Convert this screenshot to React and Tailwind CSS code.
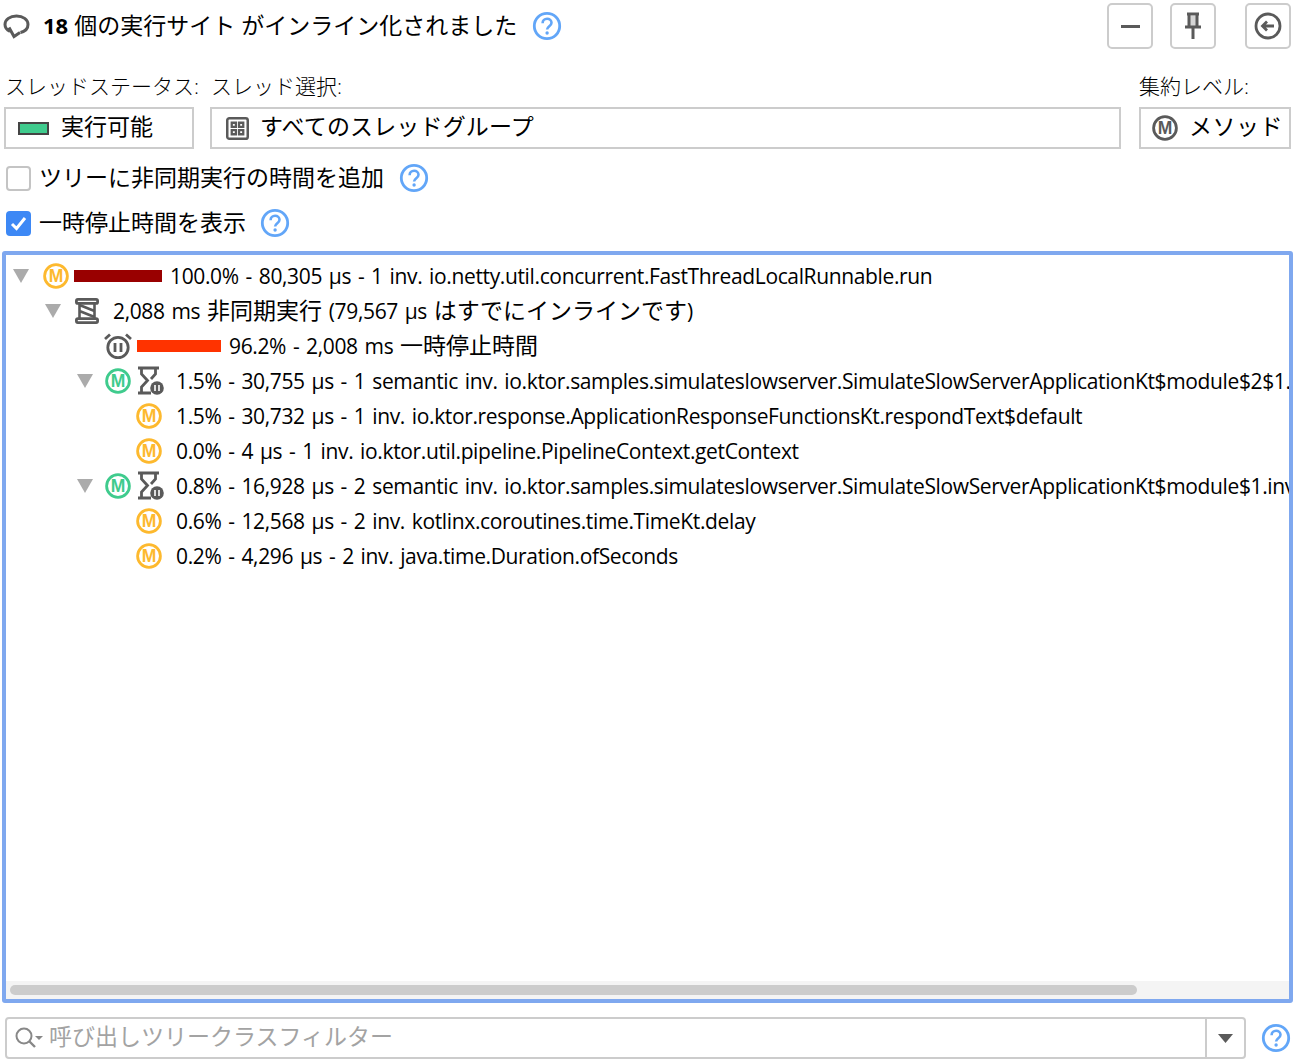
import React from "react";

const FONT = "font-['Open_Sans','Noto_Sans_CJK_JP',sans-serif]";

function HelpIcon({ className = "" }) {
  return (
    <svg width="30" height="30" viewBox="0 0 30 30" className={className}>
      <circle cx="15" cy="15" r="12.7" fill="none" stroke="#62a6f8" strokeWidth="2.8" />
      <path d="M10.6 12.2c0-2.7 2-4.400 4.500-4.400s4.400 1.600 4.400 3.900c0 3.500-4.400 3.500-4.400 6.900" fill="none" stroke="#62a6f8" strokeWidth="2.600" />
      <circle cx="15.100" cy="22" r="1.700" fill="#62a6f8" />
    </svg>
  );
}

function MethodIcon({ color = "#fdb92e", size = 26 }) {
  return (
    <svg width={size} height={size} viewBox="0 0 26 26" className="shrink-0">
      <circle cx="13" cy="13" r="11.4" fill="none" stroke={color} strokeWidth="2.800" />
      <text x="13" y="19" textAnchor="middle" fontSize="17.500" fontWeight="700" fill={color} fontFamily="Liberation Sans, sans-serif">
        M
      </text>
    </svg>
  );
}

function Caret() {
  return (
    <svg width="16" height="14" viewBox="0 0 16 14" className="shrink-0">
      <path d="M0 0h16L8 14z" fill="#ababab" />
    </svg>
  );
}

function SuspendHourglass() {
  return (
    <svg width="26" height="29" viewBox="0 0 26 29" className="shrink-0">
      <path d="M0 2h21M0 27h13M3.500 2v6l6 6.500-6 6.500v6M17.500 2v6l-4.500 5" fill="none" stroke="#5a5a5a" strokeWidth="2.800" />
      <circle cx="19" cy="22" r="6.800" fill="#5a5a5a" />
      <path d="M17 19v6M21 19v6" stroke="#fff" strokeWidth="1.600" />
    </svg>
  );
}

function AsyncIcon() {
  return (
    <svg width="24" height="26" viewBox="0 0 24 26" className="shrink-0">
      <rect x="1.400" y="1.400" width="21.200" height="4" rx="1.500" fill="none" stroke="#5a5a5a" strokeWidth="2.800" />
      <rect x="1.400" y="20.600" width="21.200" height="4" rx="1.500" fill="none" stroke="#5a5a5a" strokeWidth="2.800" />
      <path d="M4.500 5v16M19.500 5v16M4.500 7l15 6M4.500 13l15 6" fill="none" stroke="#5a5a5a" strokeWidth="2.600" />
    </svg>
  );
}

function AlarmIcon() {
  return (
    <svg width="28" height="28" viewBox="0 0 28 28" className="shrink-0">
      <circle cx="14" cy="15.500" r="10.200" fill="none" stroke="#5a5a5a" strokeWidth="2.800" />
      <path d="M11 11v9M17 11v9" stroke="#5a5a5a" strokeWidth="2.800" />
      <path d="M1 7l5-4.500M27 7l-5-4.500" stroke="#5a5a5a" strokeWidth="2.800" />
    </svg>
  );
}

function IconButton({ children, className = "" }) {
  return (
    <div className={`w-[46px] h-[46px] border-2 border-[#cccccc] rounded-[5px] flex items-center justify-center ${className}`}>
      {children}
    </div>
  );
}

function TreeRow({ indent, children }) {
  return (
    <div className="h-[35px] flex items-center whitespace-nowrap" style={{ paddingLeft: indent }}>
      {children}
    </div>
  );
}

// latin runs sit in a narrower size than the CJK ones
function Lat({ children }) {
  return <span className="text-[21px] tracking-[-0.36px] [word-spacing:1.7px] whitespace-pre">{children}</span>;
}

function RowText({ className = "", children }) {
  return <span className={`pb-[2px] ${className}`}>{children}</span>;
}

export default function App() {
  return (
    <div className={`w-[1293px] h-[1062px] overflow-hidden bg-white text-[23px] leading-[30px] text-black flex flex-col ${FONT}`}>
      {/* Header */}
      <div className="h-[46px] mt-[3px] flex items-center pr-[2px]">
        <svg width="28" height="26" viewBox="0 0 28 26" className="ml-[3px] shrink-0">
          <path d="M7 18.500C4 17 2 14.500 2 11.500 2 6.500 7 3 13.500 3S25 6.500 25 11.500c0 4.500-3.500 7-7.500 8" fill="none" stroke="#5a5a5a" strokeWidth="3" />
          <path d="M6 14.500l5 9 6-4" fill="none" stroke="#5a5a5a" strokeWidth="3" />
        </svg>
        <span className="ml-[12px] font-bold text-[22px] pb-[2px]">18</span>
        <span className="ml-[6px] pb-[2px]">個の実行サイト がインライン化されました</span>
        <HelpIcon className="ml-[15px] shrink-0" />
        <div className="ml-auto flex">
          <IconButton>
            <div className="w-[19px] h-[3px] bg-[#5a5a5a]" />
          </IconButton>
          <IconButton className="ml-[17px]">
            <svg width="18" height="28" viewBox="0 0 18 28">
              <path d="M3 2h12M5 2v12M13 2v12M1 15h16M9 15v12" fill="none" stroke="#5a5a5a" strokeWidth="3" />
              <path d="M5 4h8v10H5z" fill="#5a5a5a" opacity="0.25" />
            </svg>
          </IconButton>
          <IconButton className="ml-[29px]">
            <svg width="28" height="28" viewBox="0 0 28 28">
              <circle cx="14" cy="14" r="12" fill="none" stroke="#5a5a5a" strokeWidth="2.800" />
              <path d="M20 14H9M13 9.500 8.500 14l4.500 4.500" fill="none" stroke="#5a5a5a" strokeWidth="2.800" />
            </svg>
          </IconButton>
        </div>
      </div>

      {/* Filters */}
      <div className="flex mt-[21px] pl-[4px] pr-[2px]">
        <div className="w-[190px] shrink-0">
          <div className="h-[37px] pl-[1px] pt-[1px] text-[21px] font-light whitespace-nowrap">スレッドステータス:</div>
          <div className="h-[42px] border-2 border-[#cccccc] flex items-center pl-[12px]">
            <div className="w-[31px] h-[13px] bg-[#3fcb8d] border-2 border-[#444444]" />
            <RowText className="ml-[12px] pb-[4px]">実行可能</RowText>
          </div>
        </div>
        <div className="flex-1 ml-[16px]">
          <div className="h-[37px] pl-[1px] pt-[1px] text-[21px] font-light whitespace-nowrap">スレッド選択:</div>
          <div className="h-[42px] border-2 border-[#cccccc] flex items-center pl-[14px]">
            <svg width="23" height="23" viewBox="0 0 22 22">
              <rect x="1.200" y="1.200" width="19.600" height="19.600" rx="2" fill="none" stroke="#5a5a5a" strokeWidth="2.400" />
              <path d="M5.500 5.500h4v4h-4zM12.500 5.500h4v4h-4zM5.500 12.500h4v4h-4zM12.500 12.500h4v4h-4z" fill="none" stroke="#5a5a5a" strokeWidth="2.200" />
            </svg>
            <RowText className="ml-[11px] pb-[4px] tracking-[0.15px]">すべてのスレッドグループ</RowText>
          </div>
        </div>
        <div className="w-[152px] ml-[18px] shrink-0">
          <div className="h-[37px] pt-[1px] text-[21px] font-light whitespace-nowrap">集約レベル:</div>
          <div className="h-[42px] border-2 border-[#cccccc] flex items-center pl-[11px]">
            <MethodIcon color="#5a5a5a" />
            <RowText className="ml-[11px] pb-[4px] tracking-[0.5px] whitespace-nowrap">メソッド</RowText>
          </div>
        </div>
      </div>

      {/* Checkboxes */}
      <div className="h-[30px] mt-[14px] flex items-center pl-[6px]">
        <div className="w-[25px] h-[25px] border-2 border-[#c4c4c4] rounded-[4px]" />
        <RowText className="ml-[8px]">ツリーに非同期実行の時間を追加</RowText>
        <HelpIcon className="ml-[15px]" />
      </div>
      <div className="h-[30px] mt-[15px] flex items-center pl-[6px]">
        <div className="w-[25px] h-[25px] bg-[#3d88f5] rounded-[4px] flex items-center justify-center">
          <svg width="17" height="15" viewBox="0 0 17 15">
            <path d="M2 8l4.500 4.500L15 2" fill="none" stroke="#fff" strokeWidth="3" />
          </svg>
        </div>
        <RowText className="ml-[8px]">一時停止時間を表示</RowText>
        <HelpIcon className="ml-[14px]" />
      </div>

      {/* Tree */}
      <div className="h-[752px] mt-[13px] ml-[2px] border-[4px] border-[#7fa8ef] rounded-[3px] flex flex-col overflow-hidden">
        <div className="flex-1 pt-[3px] min-h-0 overflow-hidden">
          <TreeRow indent={7}>
            <Caret />
            <span className="ml-[14px]"><MethodIcon /></span>
            <div className="ml-[5px] w-[88px] h-[12px] shrink-0 bg-[#990000]" />
            <span className="ml-[8px]"><Lat>100.0% - 80,305 μs - 1 inv. io.netty.util.concurrent.FastThreadLocalRunnable.run</Lat></span>
          </TreeRow>
          <TreeRow indent={39}>
            <Caret />
            <span className="ml-[14px]"><AsyncIcon /></span>
            <span className="ml-[14px]">
              <Lat>2,088 ms </Lat>
              非同期実行
              <Lat> (79,567 μs </Lat>
              はすでにインラインです
              <Lat>)</Lat>
            </span>
          </TreeRow>
          <TreeRow indent={98}>
            <AlarmIcon />
            <div className="ml-[5px] w-[84px] h-[12px] shrink-0 bg-[#ff3300]" />
            <span className="ml-[8px]">
              <Lat>96.2% - 2,008 ms </Lat>
              一時停止時間
            </span>
          </TreeRow>
          <TreeRow indent={71}>
            <Caret />
            <span className="ml-[12px]"><MethodIcon color="#3fcb8d" /></span>
            <span className="ml-[7px]"><SuspendHourglass /></span>
            <span className="ml-[12px]"><Lat>1.5% - 30,755 μs - 1 semantic inv. io.ktor.samples.simulateslowserver.SimulateSlowServerApplicationKt$module$2$1.invoke</Lat></span>
          </TreeRow>
          <TreeRow indent={130}>
            <MethodIcon />
            <span className="ml-[14px]"><Lat>1.5% - 30,732 μs - 1 inv. io.ktor.response.ApplicationResponseFunctionsKt.respondText$default</Lat></span>
          </TreeRow>
          <TreeRow indent={130}>
            <MethodIcon />
            <span className="ml-[14px]"><Lat>0.0% - 4 μs - 1 inv. io.ktor.util.pipeline.PipelineContext.getContext</Lat></span>
          </TreeRow>
          <TreeRow indent={71}>
            <Caret />
            <span className="ml-[12px]"><MethodIcon color="#3fcb8d" /></span>
            <span className="ml-[7px]"><SuspendHourglass /></span>
            <span className="ml-[12px]"><Lat>0.8% - 16,928 μs - 2 semantic inv. io.ktor.samples.simulateslowserver.SimulateSlowServerApplicationKt$module$1.invoke</Lat></span>
          </TreeRow>
          <TreeRow indent={130}>
            <MethodIcon />
            <span className="ml-[14px]"><Lat>0.6% - 12,568 μs - 2 inv. kotlinx.coroutines.time.TimeKt.delay</Lat></span>
          </TreeRow>
          <TreeRow indent={130}>
            <MethodIcon />
            <span className="ml-[14px]"><Lat>0.2% - 4,296 μs - 2 inv. java.time.Duration.ofSeconds</Lat></span>
          </TreeRow>
        </div>
        {/* Scrollbar */}
        <div className="h-[18px] bg-[#f4f4f4] shrink-0 flex items-center px-[4px]">
          <div className="w-[1127px] h-[10px] bg-[#cccccc] rounded-full" />
        </div>
      </div>

      {/* Search */}
      <div className="flex items-center mt-[14px] pl-[5px] pr-[2px]">
        <div className="w-[1241px] h-[42px] border-2 border-[#cccccc] rounded-[4px] flex items-center">
          <svg width="30" height="24" viewBox="0 0 30 24" className="ml-[7px] shrink-0">
            <circle cx="10" cy="10" r="7.500" fill="none" stroke="#888888" strokeWidth="2" />
            <path d="M15.500 15.500 21 21" stroke="#888888" strokeWidth="2.400" />
            <path d="M21 10h8l-4 4z" fill="#888888" />
          </svg>
          <RowText className="ml-[5px] pb-[4px] text-[#a3a3a3] whitespace-nowrap">呼び出しツリークラスフィルター</RowText>
          <div className="ml-auto w-[39px] h-full border-l-2 border-[#cccccc] flex items-center justify-center">
            <svg width="15" height="9" viewBox="0 0 15 9">
              <path d="M0 0h15L7.500 9z" fill="#5a5a5a" />
            </svg>
          </div>
        </div>
        <HelpIcon className="ml-auto" />
      </div>
    </div>
  );
}
